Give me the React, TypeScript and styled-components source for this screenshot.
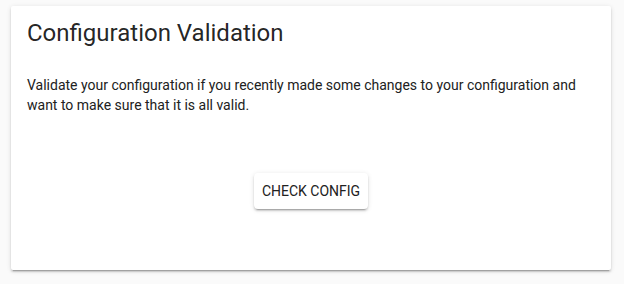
import React from 'react';
import styled, { createGlobalStyle } from 'styled-components';

const GlobalStyle = createGlobalStyle`
  html, body {
    margin: 0;
    padding: 0;
    background: #fafafa;
    font-family: Roboto, "Noto Sans", sans-serif;
    -webkit-font-smoothing: antialiased;
  }
`;

const Page = styled.div`
  padding: 6px 13px 13px 11px;
`;

const Card = styled.div`
  background: #ffffff;
  border-radius: 2px;
  box-shadow: 0 2px 2px 0 rgba(0, 0, 0, 0.14), 0 1px 5px 0 rgba(0, 0, 0, 0.12),
    0 3px 1px -2px rgba(0, 0, 0, 0.2);
  display: flex;
  flex-direction: column;
  height: 264px;
  box-sizing: border-box;
`;

const Header = styled.h1`
  margin: 0;
  padding: 11px 16px 0;
  font-size: 24px;
  font-weight: 400;
  line-height: 32px;
  color: rgba(0, 0, 0, 0.87);
`;

const Content = styled.div`
  padding: 26px 16px 0;
  font-size: 14px;
  line-height: 20px;
  color: #212121;
`;

const Text = styled.p`
  margin: 0;
`;

const ValidateContainer = styled.div`
  display: flex;
  justify-content: center;
  align-items: center;
  padding-top: 58px;
`;

const Button = styled.button`
  height: 36px;
  padding: 0 8px;
  border: none;
  border-radius: 4px;
  background: #ffffff;
  font-family: Roboto, sans-serif;
  font-size: 14px;
  font-weight: 400;
  letter-spacing: 0;
  text-transform: uppercase;
  color: #212121;
  cursor: pointer;
  box-shadow: 0 2px 2px 0 rgba(0, 0, 0, 0.14), 0 1px 5px 0 rgba(0, 0, 0, 0.12),
    0 3px 1px -2px rgba(0, 0, 0, 0.2);
`;

export default function App() {
  return (
    <>
      <GlobalStyle />
      <Page>
        <Card>
          <Header>Configuration Validation</Header>
          <Content>
            <Text>
              Validate your configuration if you recently made some changes to your configuration and
              want to make sure that it is all valid.
            </Text>
            <ValidateContainer>
              <Button>Check config</Button>
            </ValidateContainer>
          </Content>
        </Card>
      </Page>
    </>
  );
}
